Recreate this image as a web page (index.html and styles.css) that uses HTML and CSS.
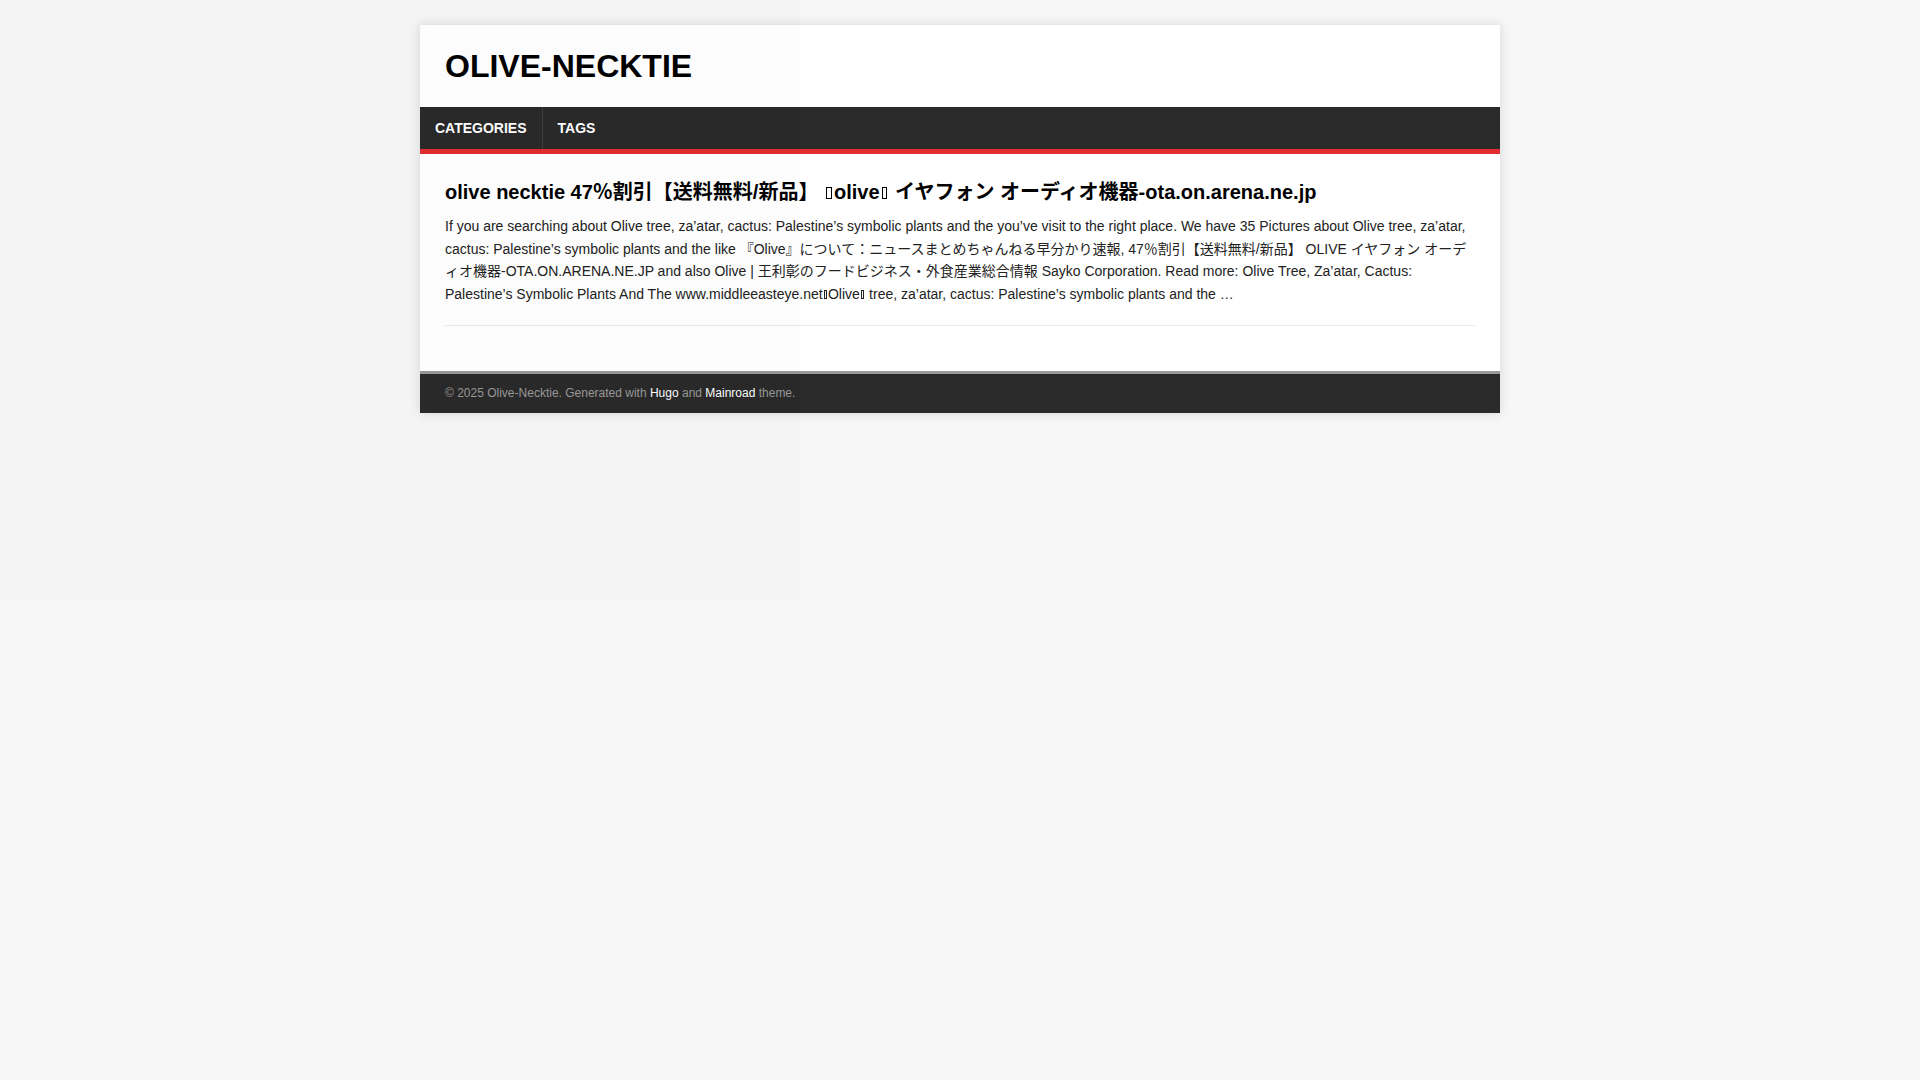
FILE: index.html
```html
<!DOCTYPE html>
<html lang="en">
<head>
<meta charset="utf-8">
<title>Olive-Necktie</title>
<link rel="stylesheet" href="styles.css">
</head>
<body>
<div class="container container--outer">
  <header class="header">
    <div class="logo"><a class="logo__link" href="#">OLIVE-NECKTIE</a></div>
  </header>
  <nav class="menu">
    <ul class="menu__list">
      <li class="menu__item"><a class="menu__link" href="#">Categories</a></li>
      <li class="menu__item"><a class="menu__link" href="#">Tags</a></li>
    </ul>
  </nav>
  <main class="wrapper">
    <article class="list__item">
      <h1 class="list__title"><a href="#">olive necktie 47％割引【送料無料/新品】 <span class="tofu"></span>olive<span class="tofu"></span> イヤフォン オーディオ機器-ota.on.arena.ne.jp</a></h1>
      <p class="list__excerpt">If you are searching about Olive tree, za’atar, cactus: Palestine’s symbolic plants and the you’ve visit to the right place. We have 35 Pictures about Olive tree, za’atar, cactus: Palestine’s symbolic plants and the like 『Olive』について：ニュースまとめちゃんねる早分かり速報, 47％割引【送料無料/新品】 OLIVE イヤフォン オーディオ機器-OTA.ON.ARENA.NE.JP and also Olive | 王利彰のフードビジネス・外食産業総合情報 Sayko Corporation. Read more: Olive Tree, Za’atar, Cactus: Palestine’s Symbolic Plants And The www.middleeasteye.net<span class="tofu"></span>Olive<span class="tofu"></span> tree, za’atar, cactus: Palestine’s symbolic plants and the …</p>
    </article>
  </main>
  <footer class="footer">
    <div class="footer__copyright">© 2025 Olive-Necktie. Generated with <a href="#">Hugo</a> and <a href="#">Mainroad</a> theme.</div>
  </footer>
</div>
<div class="tile"></div>
</body>
</html>
```
FILE: styles.css
```css
html, body {
  margin: 0;
  padding: 0;
}
body {
  background: #f7f7f7;
  color: #222;
  font-family: "Liberation Sans", "Noto Sans CJK JP", sans-serif;
  font-size: 14px;
  line-height: 1.6;
}
a {
  text-decoration: none;
  color: inherit;
}
.container {
  max-width: 1080px;
  margin: 0 auto;
}
.container--outer {
  margin: 25px auto;
  box-shadow: 0 0 10px rgba(50, 50, 50, 0.17);
}
.header {
  background: #fff;
  padding: 25px;
}
.logo__link {
  display: block;
  font-size: 32px;
  line-height: 1;
  font-weight: 700;
  color: #000;
}
.menu {
  background: #2a2a2a;
  border-bottom: 5px solid #e22d30;
}
.menu__list {
  display: flex;
  list-style: none;
  margin: 0;
  padding: 0;
}
.menu__item + .menu__item {
  border-left: 1px solid rgba(255, 255, 255, 0.1);
}
.menu__link {
  display: block;
  padding: 10px 15px;
  color: #fff;
  font-weight: 700;
  font-size: 14px;
  text-transform: uppercase;
}
.wrapper {
  background: #fff;
  padding: 25px;
}
.list__item {
  padding-bottom: 20px;
  border-bottom: 1px solid #ebebeb;
  margin-bottom: 20px;
}
.list__title {
  margin: 0 0 10px;
  font-size: 20px;
  line-height: 1.3;
  font-weight: 700;
  color: #000;
}
.list__excerpt {
  margin: 0;
}
.tofu {
  display: inline-block;
  box-sizing: border-box;
  width: 0.22em;
  height: 0.6em;
  margin: 0 0.08em;
  border: 1px solid currentColor;
  vertical-align: baseline;
}
.list__title .tofu {
  width: 0.28em;
  margin: 0 0.11em;
}
.footer {
  background: #2a2a2a;
  border-top: 3px solid #999;
  padding: 10px 25px;
  font-size: 12px;
  color: #999;
}
.footer a {
  color: #fff;
}
.tile {
  position: absolute;
  top: 0;
  left: 0;
  width: 800px;
  height: 600px;
  background: rgba(0, 0, 0, 0.012);
  pointer-events: none;
}
```
